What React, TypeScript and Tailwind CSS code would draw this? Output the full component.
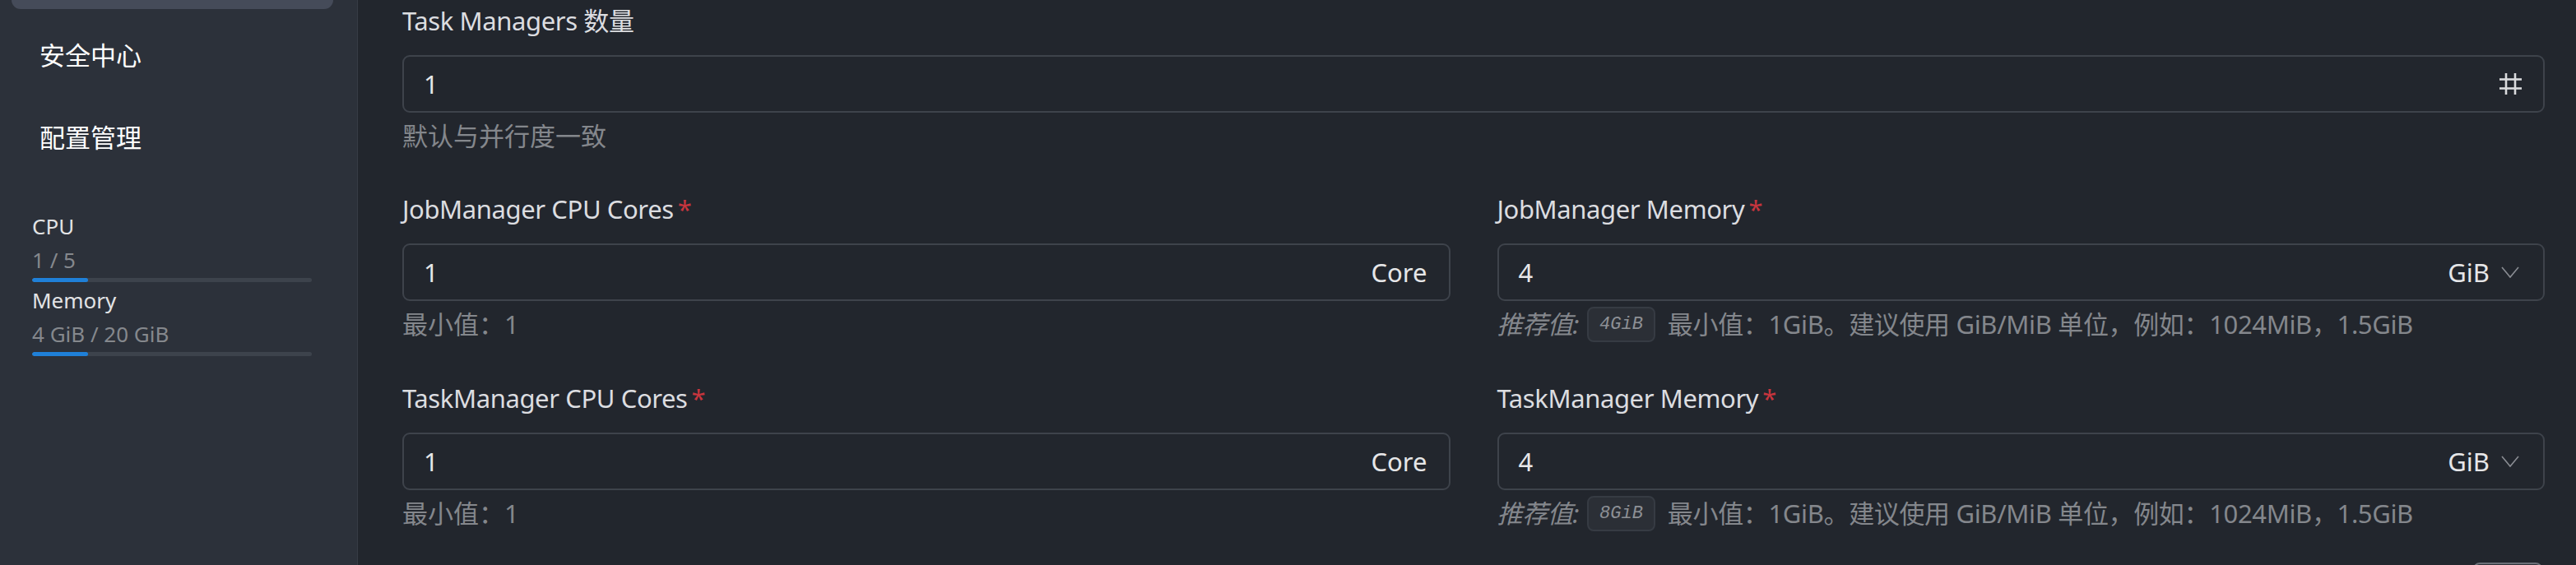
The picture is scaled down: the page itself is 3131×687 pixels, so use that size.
import React from "react";

const FONT = "font-['Noto_Sans','Noto_Sans_CJK_SC',sans-serif]";

function HashIcon() {
  return (
    <svg width="27" height="26" viewBox="0 0 27 26" fill="none" stroke="#dadbdd" strokeWidth="2.6">
      <line x1="8" y1="0" x2="8" y2="26" />
      <line x1="19" y1="0" x2="19" y2="26" />
      <line x1="0" y1="7.5" x2="27" y2="7.5" />
      <line x1="0" y1="18.5" x2="27" y2="18.5" />
    </svg>
  );
}

function Chevron() {
  return (
    <svg width="22" height="14" viewBox="0 0 22 14" fill="none" stroke="#8a8d93" strokeWidth="1.6">
      <polyline points="1,1 11,13 21,1" />
    </svg>
  );
}

function Label({ text, required }: { text: string; required?: boolean }) {
  return (
    <div className="h-[40px] flex items-center text-[31px] tracking-[-0.4px] text-[#dcdde0] whitespace-nowrap">
      <span>{text}</span>
      {required && <span className="ml-[5px] text-[#c8353e]">*</span>}
    </div>
  );
}

function InputBox({ value, right }: { value: string; right: React.ReactNode }) {
  return (
    <div className="mt-[22px] h-[70px] rounded-[9px] border-2 border-[#3e434b] bg-[#22262d] flex items-center pl-[24px] pr-[26px]">
      <span className="flex-1 text-[31px] text-[#e6e6e8]">{value}</span>
      {right}
    </div>
  );
}

function MemoryHint({ rec }: { rec: string }) {
  return (
    <div className="mt-[8px] h-[40px] flex items-center text-[31px] tracking-[-0.35px] text-[#84878c] whitespace-nowrap">
      <span className="italic">推荐值:</span>
      <span className="ml-[10px] h-[43px] px-[13px] rounded-[8px] bg-[#2b2f36] border-2 border-[#363b43] flex items-center text-[22px] tracking-normal italic font-['Liberation_Mono',monospace] text-[#8d9095]">
        {rec}
      </span>
      <span className="ml-[15px]">最小值：1GiB。建议使用 GiB/MiB 单位，例如：1024MiB，1.5GiB</span>
    </div>
  );
}

function CoreField({ label }: { label: string }) {
  return (
    <div className="flex flex-col">
      <Label text={label} required />
      <InputBox value="1" right={<span className="text-[31px] text-[#e6e6e8]">Core</span>} />
      <div className="mt-[8px] h-[40px] flex items-center text-[31px] text-[#84878c]">最小值：1</div>
    </div>
  );
}

function MemoryField({ label, rec }: { label: string; rec: string }) {
  return (
    <div className="flex flex-col">
      <Label text={label} required />
      <div className="mt-[22px] h-[70px] rounded-[9px] border-2 border-[#3e434b] bg-[#22262d] flex items-center pl-[24px] pr-[29px]">
        <span className="flex-1 text-[31px] text-[#e6e6e8]">4</span>
        <span className="text-[31px] text-[#e6e6e8]">GiB</span>
        <span className="ml-[14px] flex items-center">
          <Chevron />
        </span>
      </div>
      <MemoryHint rec={rec} />
    </div>
  );
}

function Usage({ label, value }: { label: string; value: string }) {
  return (
    <div className="flex flex-col">
      <div className="h-[34px] flex items-center text-[26px] text-[#e2e3e5]">{label}</div>
      <div className="mt-[7px] h-[34px] flex items-center text-[26px] text-[#85888d]">{value}</div>
      <div className="mt-[5px] h-[5px] w-[340px] rounded-full bg-[#3d434c] overflow-hidden">
        <div className="h-full w-[68px] rounded-full bg-[#1f80d8]" />
      </div>
    </div>
  );
}

export default function App() {
  return (
    <div className={`${FONT} w-[3131px] h-[687px] overflow-hidden flex bg-[#22262d]`}>
      <aside className="w-[435px] shrink-0 h-full bg-[#2c313a] border-r border-[#373c45] flex flex-col">
        <div className="ml-[14px] w-[391px] h-[11px] rounded-b-[13px] bg-[#454b59]" />
        <div className="mt-[14px] ml-[14px] w-[391px] h-[84px] flex items-center pl-[34px] text-[31px] text-white">
          安全中心
        </div>
        <div className="mt-[16px] ml-[14px] w-[391px] h-[84px] flex items-center pl-[34px] text-[31px] text-white">
          配置管理
        </div>
        <div className="mt-[49px] ml-[39px] flex flex-col gap-[5px]">
          <Usage label="CPU" value="1 / 5" />
          <Usage label="Memory" value="4 GiB / 20 GiB" />
        </div>
      </aside>
      <main className="flex-1 pl-[54px] pr-[38px] pt-[5px] flex flex-col">
        <div className="flex flex-col">
          <Label text="Task Managers 数量" />
          <InputBox value="1" right={<HashIcon />} />
          <div className="mt-[8px] h-[40px] flex items-center text-[31px] text-[#84878c]">默认与并行度一致</div>
        </div>
        <div className="mt-[49px] grid grid-cols-2 gap-x-[57px]">
          <CoreField label="JobManager CPU Cores" />
          <MemoryField label="JobManager Memory" rec="4GiB" />
        </div>
        <div className="mt-[50px] grid grid-cols-2 gap-x-[57px]">
          <CoreField label="TaskManager CPU Cores" />
          <MemoryField label="TaskManager Memory" rec="8GiB" />
        </div>
        <div className="mt-[40px] flex justify-end pr-[3px]">
          <div className="w-[84px] h-[40px] rounded-t-[8px] border-2 border-[#6b7078] bg-[#2e3239]" />
        </div>
      </main>
    </div>
  );
}
